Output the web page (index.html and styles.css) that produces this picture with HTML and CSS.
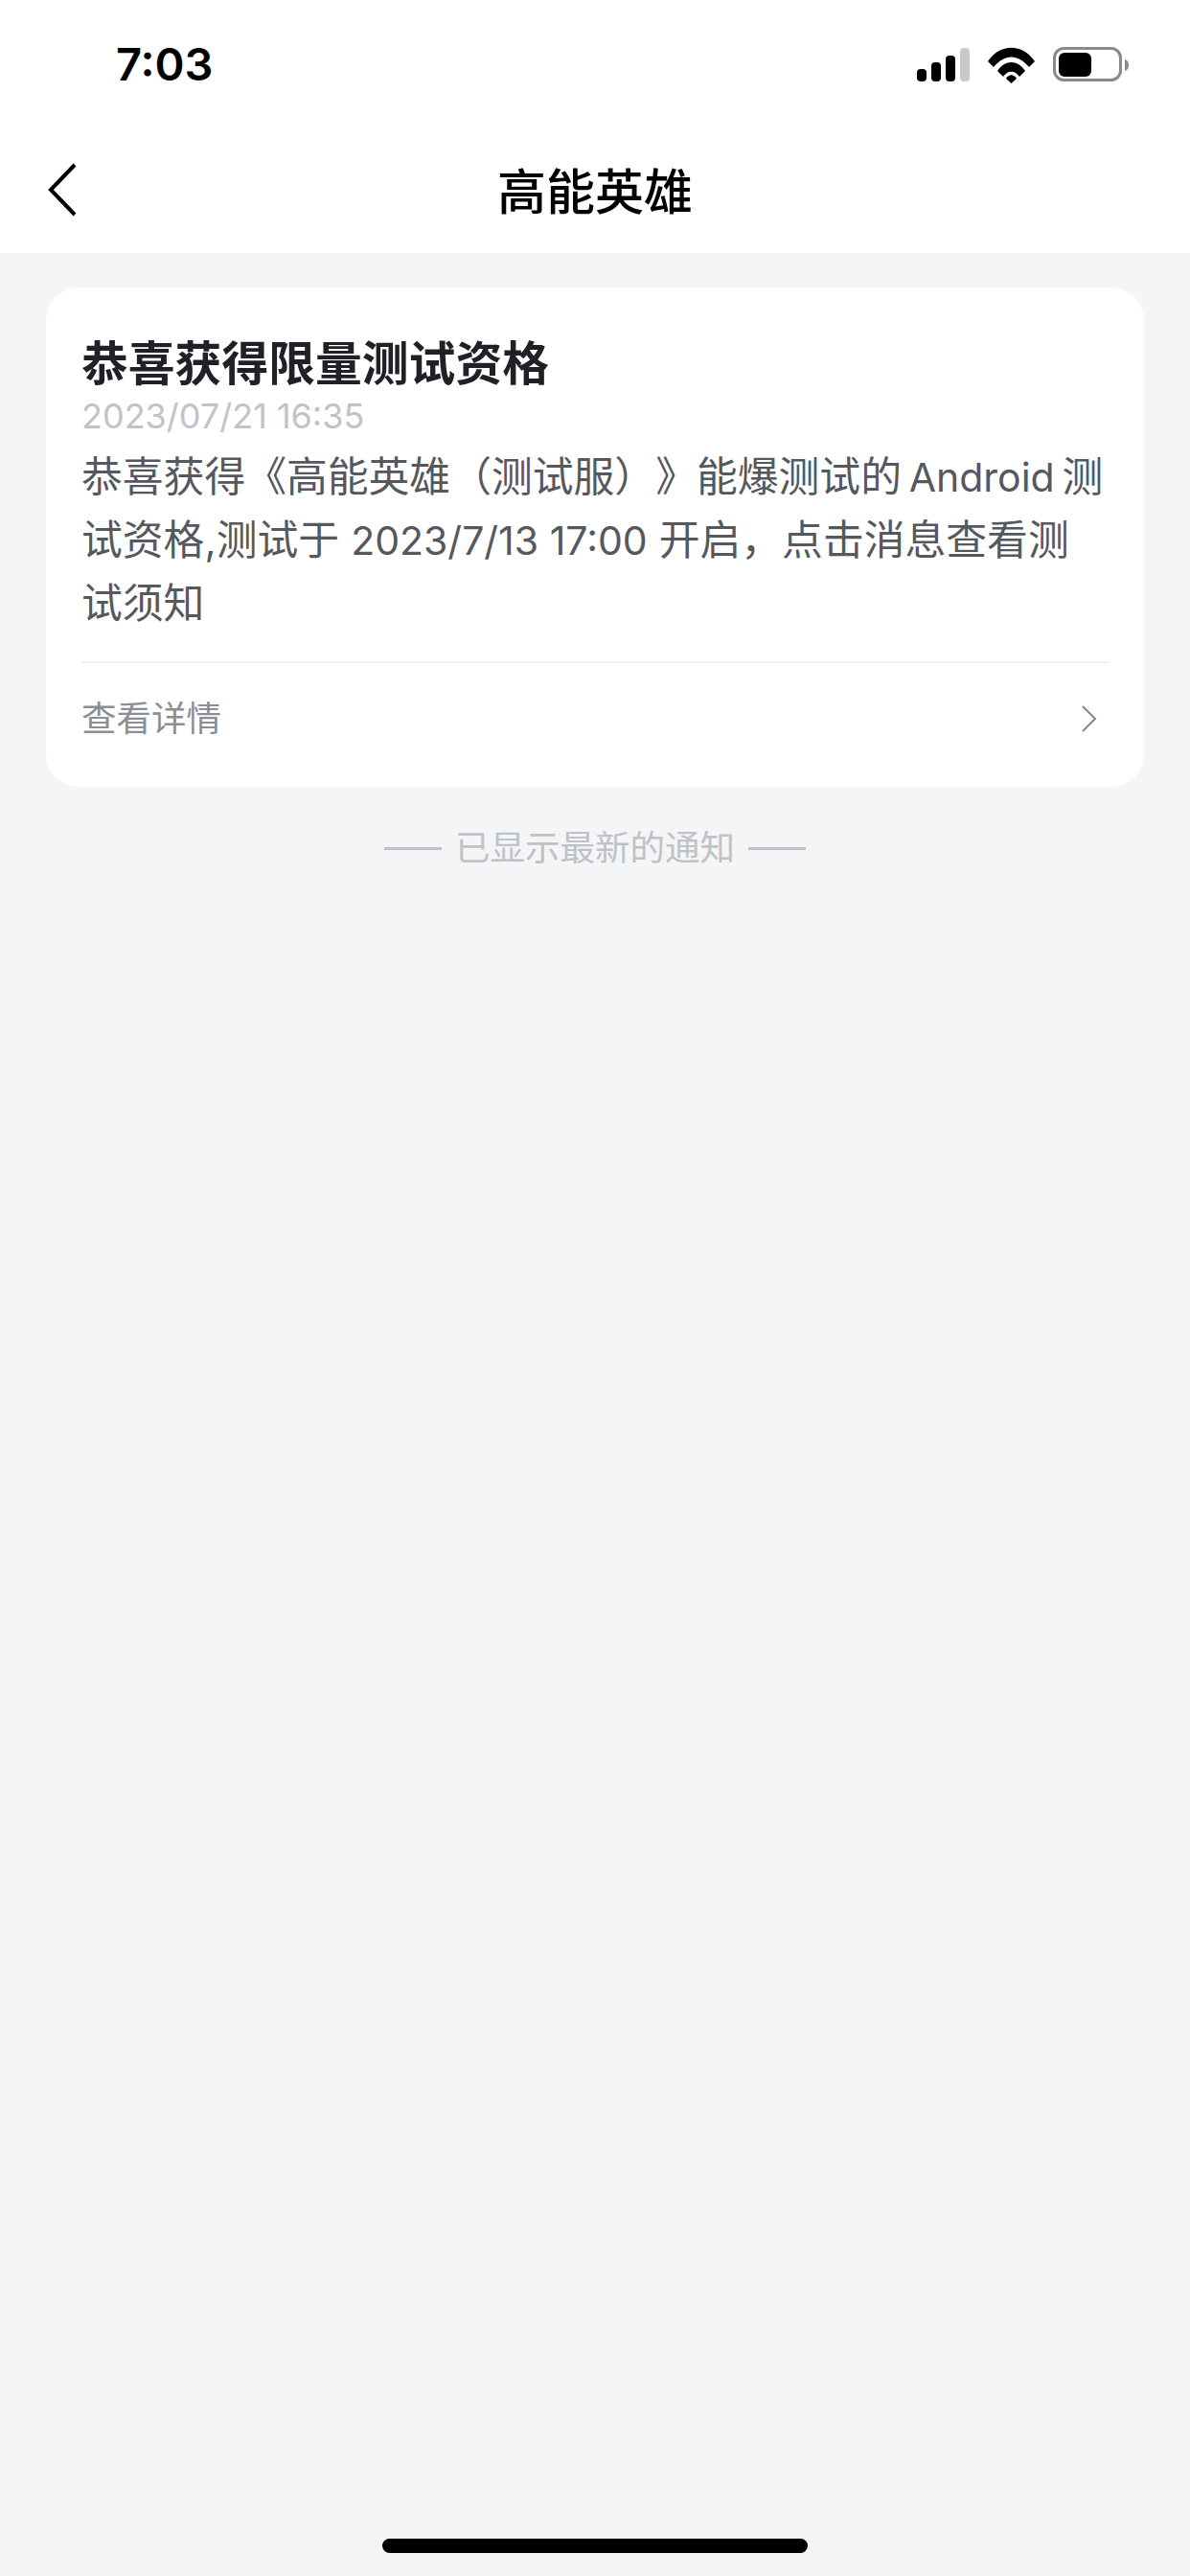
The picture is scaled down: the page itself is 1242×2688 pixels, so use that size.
FILE: index.html
```html
<!DOCTYPE html>
<html lang="zh-CN">
<head>
    <meta charset="UTF-8">
    <meta name="viewport" content="width=device-width, initial-scale=1.0">
    <title>高能英雄</title>
    <link rel="stylesheet" href="styles.css">
</head>
<body>
    <div class="page">
        <header class="top">
            <div class="status-bar">
                <span class="time">7:03</span>
                <svg class="status-icons" width="230" height="40" viewBox="0 0 230 40">
                    <!-- signal -->
                    <rect x="1" y="24" width="10" height="13" rx="4" fill="#000"/>
                    <rect x="16" y="17" width="10" height="20" rx="4" fill="#000"/>
                    <rect x="31" y="10" width="10" height="27" rx="4" fill="#000"/>
                    <rect x="46" y="2" width="10" height="35" rx="4" fill="#c9c9c9"/>
                    <!-- wifi -->
                    <path d="M75 16 C88 -3 111 -3 124 16 L118 22 C106 8 93 8 81 22 Z" fill="#000"/>
                    <path d="M85 26 C93 14 106 14 114 26 L108 32 C103 25 96 25 91 32 Z" fill="#000"/>
                    <path d="M94 34 C97 29 102 29 105 34 L99.500 39 Z" fill="#000"/>
                    <!-- battery -->
                    <rect x="144.500" y="2.500" width="69" height="33" rx="10" fill="none" stroke="#8a8a8a" stroke-width="3"/>
                    <rect x="149" y="7" width="34" height="25" rx="6" fill="#000"/>
                    <path d="M218 14 C221 15 222 17 222 20 C222 23 221 25 218 26 Z" fill="#8a8a8a"/>
                </svg>
            </div>
            <nav class="nav">
                <svg class="back" width="32" height="56" viewBox="0 0 32 56">
                    <path d="M28 2 L3 28 L28 54" fill="none" stroke="#000" stroke-width="4"/>
                </svg>
                <h1 class="nav-title">高能英雄</h1>
                <span></span>
            </nav>
        </header>

        <main class="content">
            <section class="card">
                <h2 class="card-title">恭喜获得限量测试资格</h2>
                <div class="card-date">2023/07/21 16:35</div>
                <p class="card-text">恭喜获得《高能英雄（测试服）》能爆测试的&thinsp;<span class="latin">Android</span>&thinsp;测试资格,测试于 <span class="latin">2023/7/13 17:00</span> 开启，点击消息查看测试须知</p>
                <div class="card-link">
                    <span class="card-link-text">查看详情</span>
                    <svg width="18" height="30" viewBox="0 0 18 30">
                        <path d="M2 2 L15 15 L2 28" fill="none" stroke="#85888f" stroke-width="2"/>
                    </svg>
                </div>
            </section>
            <p class="end-note">已显示最新的通知</p>
        </main>

        <div class="home-bar"></div>
    </div>
</body>
</html>
```

FILE: styles.css
```css
body {
    margin: 0;
    font-family: Inter, "Noto Sans CJK SC", sans-serif;
    background-color: #f4f5f7;
}
.page {
    display: flex;
    flex-direction: column;
    min-height: 100vh;
}
.top {
    background-color: #fff;
}
.status-bar {
    display: flex;
    justify-content: space-between;
    align-items: center;
    height: 132px;
    padding: 0 56px 0 121px;
    box-sizing: border-box;
}
.time {
    font-size: 47px;
    font-weight: 600;
    color: #000;
}
.status-icons {
    display: block;
    margin-top: 4px;
}
.nav {
    display: grid;
    grid-template-columns: 1fr auto 1fr;
    align-items: center;
    height: 132px;
    padding: 0 50px;
}
.nav-title {
    margin: 0 0 3px;
    font-size: 51px;
    font-weight: 500;
    color: #000;
}
.back {
    display: block;
}
.content {
    flex: 1;
    padding: 36px 48px 0;
}
.card {
    background-color: #fff;
    border-radius: 34px;
    padding: 48px 36px 0 37px;
    height: 521px;
    box-sizing: border-box;
}
.card-title {
    margin: 0;
    font-size: 48.800px;
    line-height: 63px;
    font-weight: 700;
    color: #1f2126;
}
.card-date {
    font-size: 36px;
    line-height: 46px;
    color: #c0c3c8;
}
.card-text {
    margin: 8px 0 0;
    padding-right: 4px;
    font-size: 42.800px;
    line-height: 65px;
    color: #55585e;
    text-spacing-trim: space-all;
}
.latin {
    font-size: 41px;
}
.card-link {
    display: flex;
    justify-content: space-between;
    align-items: center;
    margin-top: 28px;
    height: 116px;
    padding-right: 12px;
    border-top: 2px solid #f0f1f3;
    font-size: 36.500px;
    color: #8b8e94;
}
.card-link-text {
    margin-bottom: 5px;
}
.end-note {
    display: flex;
    justify-content: center;
    align-items: center;
    gap: 14px;
    margin: 38px 0 0;
    font-size: 36.500px;
    line-height: 52px;
    color: #bfc2c6;
}
.end-note::before,
.end-note::after {
    content: "";
    width: 60px;
    height: 3px;
    background-color: #bfc2c6;
}
.home-bar {
    align-self: center;
    width: 444px;
    height: 15px;
    margin-bottom: 24px;
    border-radius: 8px;
    background-color: #000;
}
```
